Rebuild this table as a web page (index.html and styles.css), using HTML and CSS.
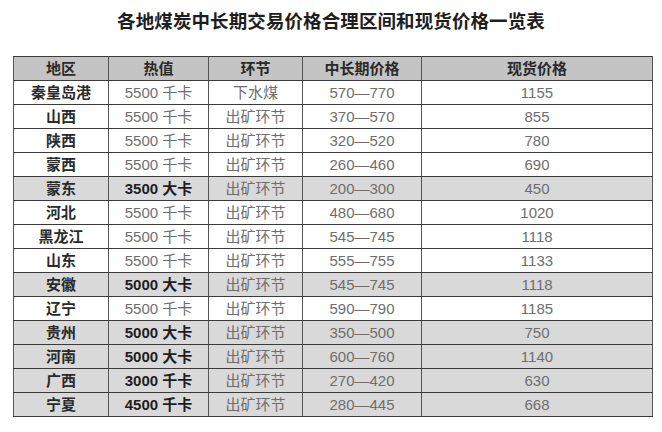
FILE: index.html
```html
<!DOCTYPE html>
<html lang="zh-CN">
<head>
<meta charset="utf-8">
<title>各地煤炭中长期交易价格合理区间和现货价格一览表</title>
<link rel="stylesheet" href="styles.css">
</head>
<body>
<h1 class="title">各地煤炭中长期交易价格合理区间和现货价格一览表</h1>
<table class="grid">
  <colgroup>
    <col class="c1"><col class="c2"><col class="c3"><col class="c4"><col class="c5">
  </colgroup>
  <thead>
    <tr><th>地区</th><th>热值</th><th>环节</th><th>中长期价格</th><th>现货价格</th></tr>
  </thead>
  <tbody>
    <tr><td class="reg">秦皇岛港</td><td class="lt">5500 千卡</td><td class="lt">下水煤</td><td class="lt">570—770</td><td class="lt">1155</td></tr>
    <tr><td class="reg">山西</td><td class="lt">5500 千卡</td><td class="lt">出矿环节</td><td class="lt">370—570</td><td class="lt">855</td></tr>
    <tr><td class="reg">陕西</td><td class="lt">5500 千卡</td><td class="lt">出矿环节</td><td class="lt">320—520</td><td class="lt">780</td></tr>
    <tr><td class="reg">蒙西</td><td class="lt">5500 千卡</td><td class="lt">出矿环节</td><td class="lt">260—460</td><td class="lt">690</td></tr>
    <tr class="sh"><td class="reg">蒙东</td><td class="bd">3500 大卡</td><td class="lt">出矿环节</td><td class="lt">200—300</td><td class="lt">450</td></tr>
    <tr><td class="reg">河北</td><td class="lt">5500 千卡</td><td class="lt">出矿环节</td><td class="lt">480—680</td><td class="lt">1020</td></tr>
    <tr><td class="reg">黑龙江</td><td class="lt">5500 千卡</td><td class="lt">出矿环节</td><td class="lt">545—745</td><td class="lt">1118</td></tr>
    <tr><td class="reg">山东</td><td class="lt">5500 千卡</td><td class="lt">出矿环节</td><td class="lt">555—755</td><td class="lt">1133</td></tr>
    <tr class="sh"><td class="reg">安徽</td><td class="bd">5000 大卡</td><td class="lt">出矿环节</td><td class="lt">545—745</td><td class="lt">1118</td></tr>
    <tr><td class="reg">辽宁</td><td class="lt">5500 千卡</td><td class="lt">出矿环节</td><td class="lt">590—790</td><td class="lt">1185</td></tr>
    <tr class="sh"><td class="reg">贵州</td><td class="bd">5000 大卡</td><td class="lt">出矿环节</td><td class="lt">350—500</td><td class="lt">750</td></tr>
    <tr class="sh"><td class="reg">河南</td><td class="bd">5000 大卡</td><td class="lt">出矿环节</td><td class="lt">600—760</td><td class="lt">1140</td></tr>
    <tr class="sh"><td class="reg">广西</td><td class="bd">3000 千卡</td><td class="lt">出矿环节</td><td class="lt">270—420</td><td class="lt">630</td></tr>
    <tr class="sh"><td class="reg">宁夏</td><td class="bd">4500 千卡</td><td class="lt">出矿环节</td><td class="lt">280—445</td><td class="lt">668</td></tr>
  </tbody>
</table>
</body>
</html>
```

FILE: styles.css
```css
html, body {
  margin: 0;
  padding: 0;
  background: #ffffff;
}
body {
  font-family: "Liberation Sans", "Noto Sans CJK SC", sans-serif;
  color: #222;
}
.title {
  margin: 0;
  padding-top: 10px;
  height: 46px;
  box-sizing: border-box;
  text-align: center;
  font-size: 18.5px;
  line-height: 24px;
  font-weight: 700;
  color: #1e1e1e;
  letter-spacing: 0.1px;
}
.grid {
  margin-left: 13px;
  margin-top: 10px;
  border-collapse: collapse;
  table-layout: fixed;
  width: 639px;
  border: 1px solid #333;
}
.c1 { width: 95px; }
.c2 { width: 100px; }
.c3 { width: 94px; }
.c4 { width: 119px; }
.c5 { width: 231px; }
.grid th, .grid td {
  height: 23px;
  padding: 0;
  text-align: center;
  vertical-align: middle;
  font-size: 15px;
  line-height: 23px;
  border: 1px solid #3a3a3a;
  border-left-color: #555;
  border-right-color: #555;
  white-space: nowrap;
}
.grid th {
  background: #c4c4c4;
  font-weight: 700;
  color: #2a2a2a;
}
.grid tr.sh td {
  background: #d9d9d9;
}
.reg {
  font-weight: 700;
  color: #2a2a2a;
}
.lt {
  color: #6e6e6e;
  font-weight: 400;
}
.bd {
  font-weight: 700;
  color: #1e1e1e;
}
```
